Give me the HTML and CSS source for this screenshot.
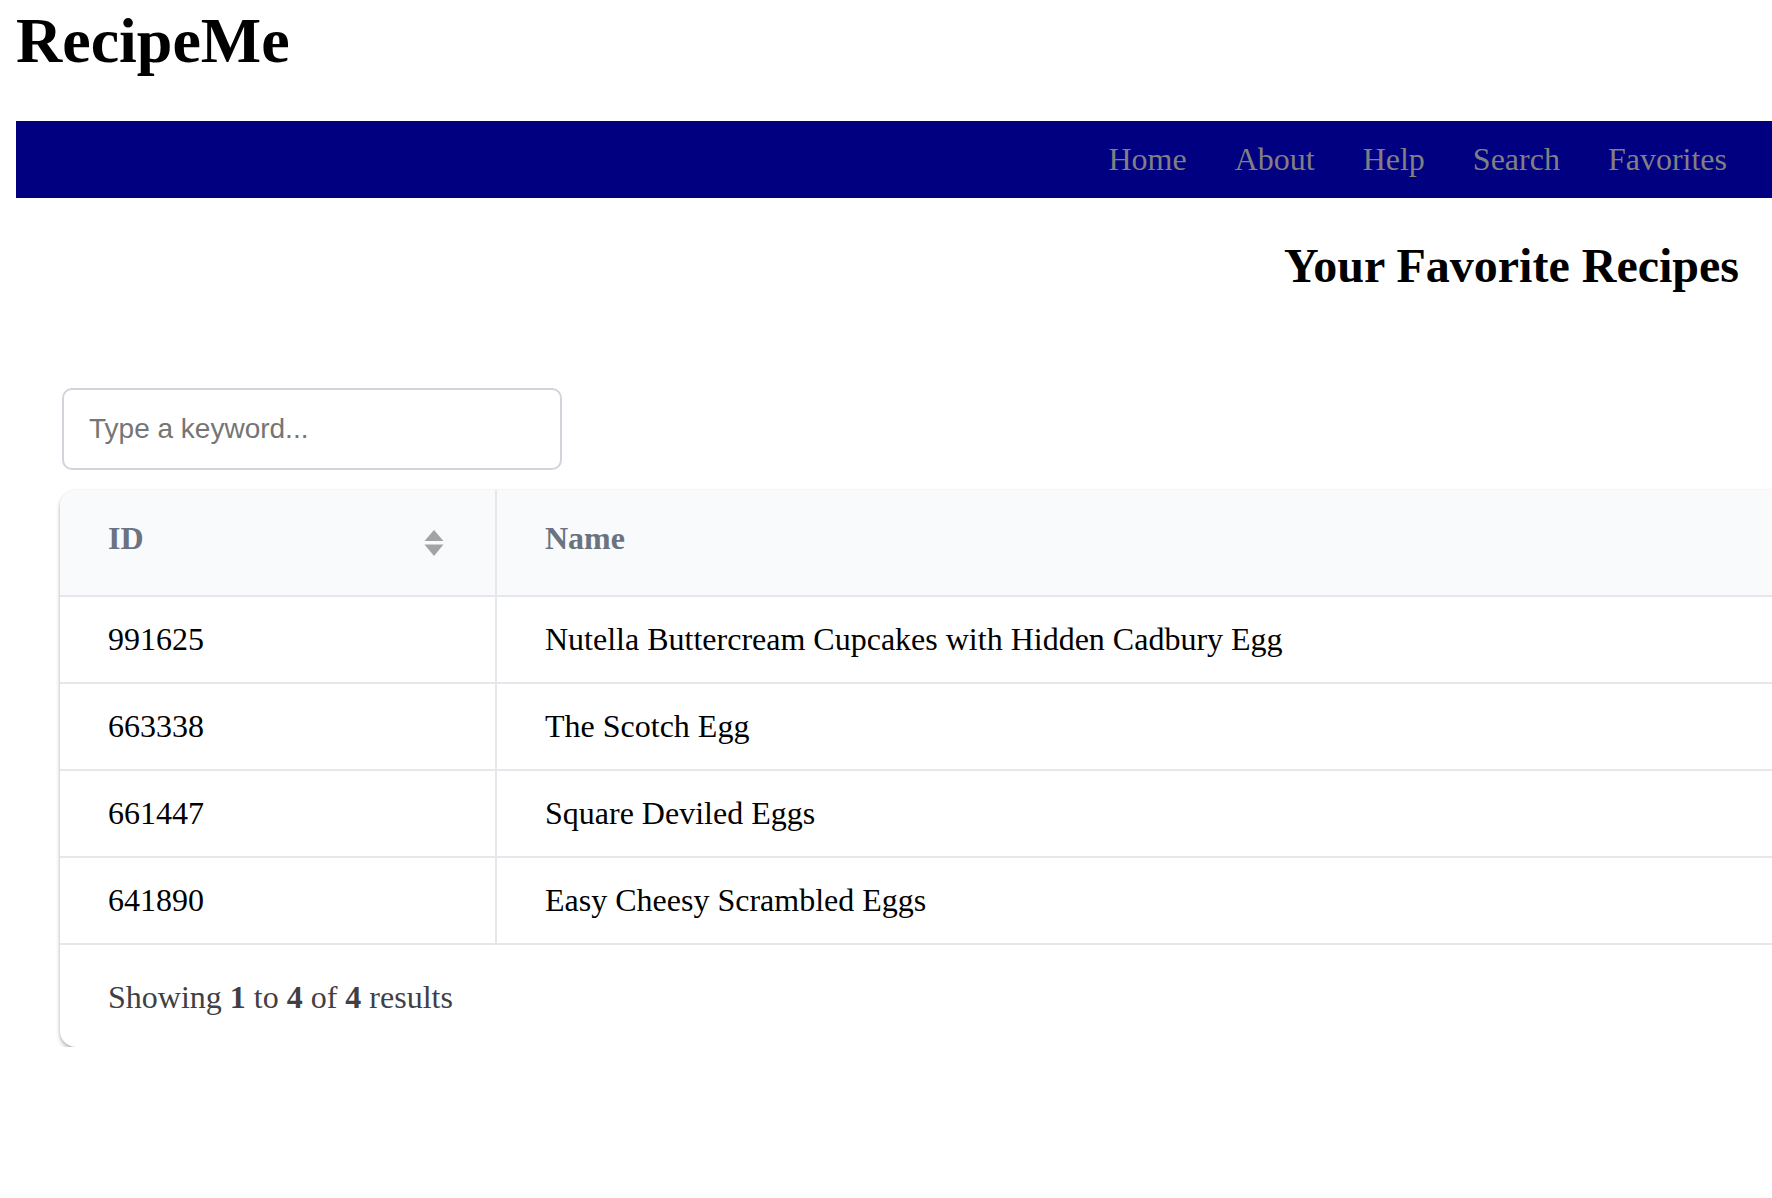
FILE: index.html
```html
<!DOCTYPE html>
<html lang="en">
<head>
<meta charset="utf-8">
<title>RecipeMe</title>
<link rel="stylesheet" href="styles.css">
</head>
<body>
<header class="site-header">
  <h1 class="brand">RecipeMe</h1>
  <nav class="main-nav">
    <a href="#">Home</a>
    <a href="#">About</a>
    <a href="#">Help</a>
    <a href="#">Search</a>
    <a href="#">Favorites</a>
  </nav>
</header>
<main class="content">
  <h2 class="page-title">Your Favorite Recipes</h2>
  <div class="search-wrap">
    <input class="search-input" type="text" placeholder="Type a keyword...">
  </div>
  <div class="table-card">
    <table class="recipes">
      <thead>
        <tr>
          <th class="col-id">
            <div class="th-inner">
              <span>ID</span>
              <svg class="sort-icon" width="20" height="27" viewBox="0 0 20 27" aria-hidden="true">
                <polygon points="10,0 19.5,11 0.5,11" fill="#a3a3a3"/>
                <polygon points="0.5,14.5 19.5,14.5 10,26" fill="#a3a3a3"/>
              </svg>
            </div>
          </th>
          <th class="col-name">Name</th>
        </tr>
      </thead>
      <tbody>
        <tr><td>991625</td><td>Nutella Buttercream Cupcakes with Hidden Cadbury Egg</td></tr>
        <tr><td>663338</td><td>The Scotch Egg</td></tr>
        <tr><td>661447</td><td>Square Deviled Eggs</td></tr>
        <tr><td>641890</td><td>Easy Cheesy Scrambled Eggs</td></tr>
      </tbody>
    </table>
    <div class="table-footer">Showing <b>1</b> to <b>4</b> of <b>4</b> results</div>
  </div>
</main>
</body>
</html>
```

FILE: styles.css
```css
html {
  overflow-x: hidden;
}

body {
  margin: 0;
  padding: 4px 0 0 16px;
  font-family: "Liberation Serif", "Times New Roman", serif;
  color: #000;
  background: #fff;
  overflow-x: hidden;
}

.brand {
  font-size: 64px;
  font-weight: bold;
  margin: 0 0 43px 0;
  line-height: normal;
}

.main-nav {
  background: #000080;
  height: 77px;
  display: flex;
  align-items: center;
  justify-content: flex-end;
  gap: 48px;
  padding-right: 45px;
}

.main-nav a {
  color: #808080;
  font-size: 32px;
  text-decoration: none;
  line-height: normal;
}

.page-title {
  font-size: 48px;
  font-weight: bold;
  text-align: right;
  margin: 40px 33px 95px 0;
  line-height: normal;
}

.search-wrap {
  margin-left: 46px;
  height: 82px;
}

.search-input {
  display: block;
  box-sizing: border-box;
  width: 500px;
  height: 82px;
  border: 2px solid #d1d5db;
  border-radius: 10px;
  padding: 0 25px;
  font-family: "Liberation Sans", Arial, sans-serif;
  font-size: 28px;
  color: #111;
  background: #fff;
  outline: none;
}

.search-input::placeholder {
  color: #757575;
}

.table-card {
  margin-top: 20px;
  margin-left: 44px;
  width: 1800px;
  border-radius: 16px;
  overflow: hidden;
  background: #fff;
  box-shadow: 0 3px 4px rgba(0, 0, 0, 0.28), 0 0 2px rgba(0, 0, 0, 0.1);
}

.recipes {
  width: 100%;
  border-collapse: separate;
  border-spacing: 0;
  table-layout: fixed;
}

.recipes th,
.recipes td {
  text-align: left;
  font-size: 32px;
  line-height: normal;
  border-bottom: 2px solid #e5e7eb;
}

.recipes th {
  background: #f9fafb;
  color: #6b7280;
  font-weight: bold;
  padding: 30px 48px 38px 48px;
}

.recipes td {
  padding: 24px 48px;
  color: #000;
}

.recipes th:first-child,
.recipes td:first-child {
  box-sizing: border-box;
  width: 437px;
  border-right: 2px solid #e5e7eb;
}

.recipes th.col-id {
  padding-right: 51px;
}

.th-inner {
  display: flex;
  align-items: center;
  justify-content: space-between;
}

.sort-icon {
  display: block;
  margin-top: 10px;
}

.table-footer {
  padding: 34px 48px 31px 48px;
  font-size: 32px;
  line-height: normal;
  color: #3f3f46;
}
```
